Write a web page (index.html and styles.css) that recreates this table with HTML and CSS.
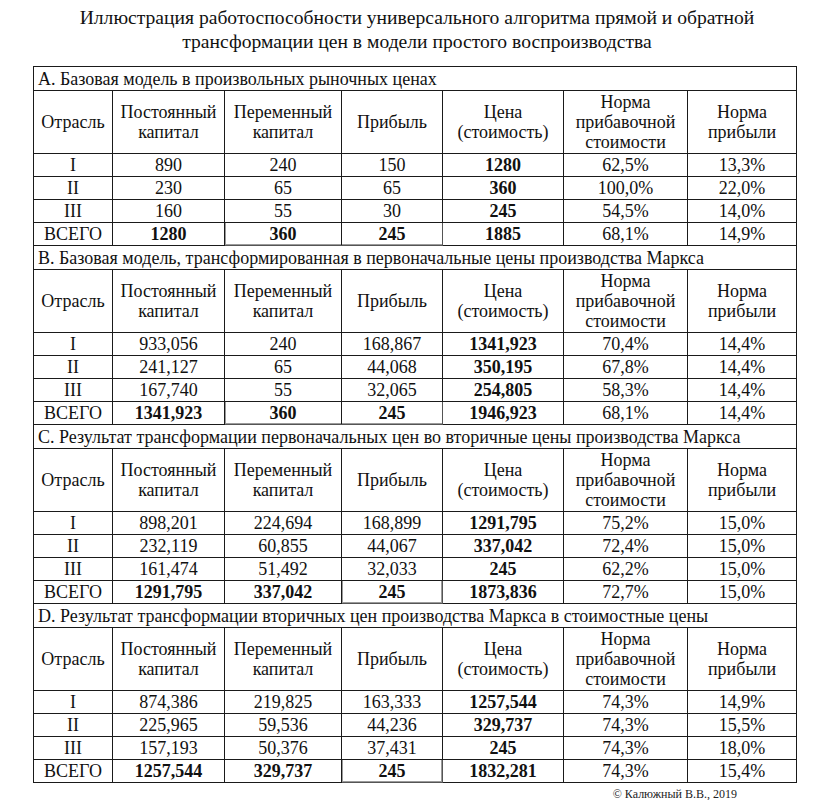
FILE: index.html
```html
<!DOCTYPE html>
<html lang="ru">
<head>
<meta charset="utf-8">
<title>Иллюстрация работоспособности</title>
<link rel="stylesheet" href="styles.css">
</head>
<body>
<div class="page">
  <h1 class="title">Иллюстрация работоспособности универсального алгоритма прямой и обратной<br>трансформации цен в модели простого воспроизводства</h1>
  <table class="grid">
    <colgroup>
      <col class="c1"><col class="c2"><col class="c3"><col class="c4"><col class="c5"><col class="c6"><col class="c7">
    </colgroup>
    <tbody>
      <tr class="sec"><td colspan="7">А. Базовая модель в произвольных рыночных ценах</td></tr>
      <tr class="head"><td>Отрасль</td><td>Постоянный<br>капитал</td><td>Переменный<br>капитал</td><td>Прибыль</td><td>Цена<br>(стоимость)</td><td>Норма<br>прибавочной<br>стоимости</td><td>Норма<br>прибыли</td></tr>
      <tr class="row"><td>I</td><td>890</td><td>240</td><td>150</td><td class="b">1280</td><td>62,5%</td><td>13,3%</td></tr>
      <tr class="row gl"><td>II</td><td>230</td><td>65</td><td>65</td><td class="b">360</td><td>100,0%</td><td>22,0%</td></tr>
      <tr class="row"><td>III</td><td>160</td><td>55</td><td>30</td><td class="b">245</td><td>54,5%</td><td>14,0%</td></tr>
      <tr class="row"><td>ВСЕГО</td><td class="b">1280</td><td class="b bx bl">360</td><td class="b bx br">245</td><td class="b">1885</td><td>68,1%</td><td>14,9%</td></tr>

      <tr class="sec"><td colspan="7">B. Базовая модель, трансформированная в первоначальные цены производства Маркса</td></tr>
      <tr class="head"><td>Отрасль</td><td>Постоянный<br>капитал</td><td>Переменный<br>капитал</td><td>Прибыль</td><td>Цена<br>(стоимость)</td><td>Норма<br>прибавочной<br>стоимости</td><td>Норма<br>прибыли</td></tr>
      <tr class="row"><td>I</td><td>933,056</td><td>240</td><td>168,867</td><td class="b">1341,923</td><td>70,4%</td><td>14,4%</td></tr>
      <tr class="row"><td>II</td><td>241,127</td><td>65</td><td>44,068</td><td class="b">350,195</td><td>67,8%</td><td>14,4%</td></tr>
      <tr class="row gl"><td>III</td><td>167,740</td><td>55</td><td>32,065</td><td class="b">254,805</td><td>58,3%</td><td>14,4%</td></tr>
      <tr class="row"><td>ВСЕГО</td><td class="b">1341,923</td><td class="b bx bl">360</td><td class="b bx br">245</td><td class="b">1946,923</td><td>68,1%</td><td>14,4%</td></tr>

      <tr class="sec"><td colspan="7">C. Результат трансформации первоначальных цен во вторичные цены производства Маркса</td></tr>
      <tr class="head"><td>Отрасль</td><td>Постоянный<br>капитал</td><td>Переменный<br>капитал</td><td>Прибыль</td><td>Цена<br>(стоимость)</td><td>Норма<br>прибавочной<br>стоимости</td><td>Норма<br>прибыли</td></tr>
      <tr class="row"><td>I</td><td>898,201</td><td>224,694</td><td>168,899</td><td class="b">1291,795</td><td>75,2%</td><td>15,0%</td></tr>
      <tr class="row gl"><td>II</td><td>232,119</td><td>60,855</td><td>44,067</td><td class="b">337,042</td><td>72,4%</td><td>15,0%</td></tr>
      <tr class="row"><td>III</td><td>161,474</td><td>51,492</td><td>32,033</td><td class="b">245</td><td>62,2%</td><td>15,0%</td></tr>
      <tr class="row"><td>ВСЕГО</td><td class="b">1291,795</td><td class="b">337,042</td><td class="b bx bl br">245</td><td class="b">1873,836</td><td>72,7%</td><td>15,0%</td></tr>

      <tr class="sec"><td colspan="7">D. Результат трансформации вторичных цен производства Маркса в стоимостные цены</td></tr>
      <tr class="head"><td>Отрасль</td><td>Постоянный<br>капитал</td><td>Переменный<br>капитал</td><td>Прибыль</td><td>Цена<br>(стоимость)</td><td>Норма<br>прибавочной<br>стоимости</td><td>Норма<br>прибыли</td></tr>
      <tr class="row"><td>I</td><td>874,386</td><td>219,825</td><td>163,333</td><td class="b">1257,544</td><td>74,3%</td><td>14,9%</td></tr>
      <tr class="row"><td>II</td><td>225,965</td><td>59,536</td><td>44,236</td><td class="b">329,737</td><td>74,3%</td><td>15,5%</td></tr>
      <tr class="row gl"><td>III</td><td>157,193</td><td>50,376</td><td>37,431</td><td class="b">245</td><td>74,3%</td><td>18,0%</td></tr>
      <tr class="row"><td>ВСЕГО</td><td class="b">1257,544</td><td class="b">329,737</td><td class="b bx bl br">245</td><td class="b">1832,281</td><td>74,3%</td><td>15,4%</td></tr>
    </tbody>
  </table>
  <div class="footer"><span class="copy">© Калюжный В.В., 2019</span></div>
</div>
</body>
</html>
```

FILE: styles.css
```css
html, body {
  margin: 0;
  padding: 0;
  background: #ffffff;
}

.page {
  width: 834px;
  font-family: "Liberation Serif", "Times New Roman", serif;
  color: #111;
}

.title {
  margin: 6px 0 0 0;
  font-family: "Liberation Serif", "Times New Roman", serif;
  font-weight: normal;
  font-size: 19.6px;
  line-height: 24px;
  text-align: center;
  color: #111;
}

.grid {
  margin: 12px 0 0 33px;
  border-collapse: collapse;
  table-layout: fixed;
  width: 763px;
  font-family: "Liberation Serif", "Times New Roman", serif;
  font-size: 18px;
}

.c1 { width: 79px; }
.c2 { width: 112px; }
.c3 { width: 117px; }
.c4 { width: 101px; }
.c5 { width: 121px; }
.c6 { width: 124px; }
.c7 { width: 109px; }

.grid td {
  border: 1px solid #1a1a1a;
  padding: 0;
  text-align: center;
  vertical-align: middle;
  line-height: 20px;
}

.sec td {
  text-align: left;
  padding-left: 4px;
  height: 23px;
}

.head td {
  height: 62px;
}

.row td {
  height: 22px;
}

.gl td {
  border-top: 1px solid #7a7a7a;
}

.grid td.b {
  font-weight: bold;
}

.grid td.bx {
  border-top: 1px solid #000;
  border-bottom: 1px solid #555;
  box-shadow: inset 0 -1px 0 #9a9a9a;
}

.grid td.bl {
  border-left: 1px solid #555;
  box-shadow: inset 1px -1px 0 #9a9a9a;
}

.grid td.br {
  border-right: 1px solid #555;
}

.grid td.bl.br {
  box-shadow: inset 1px -1px 0 #9a9a9a, inset -1px 0 0 #9a9a9a;
}

.footer {
  display: flex;
  justify-content: flex-end;
  padding: 4px 97px 0 0;
}

.copy {
  font-family: "Liberation Serif", "Times New Roman", serif;
  font-size: 12px;
  line-height: 14px;
  color: #222;
}
```
